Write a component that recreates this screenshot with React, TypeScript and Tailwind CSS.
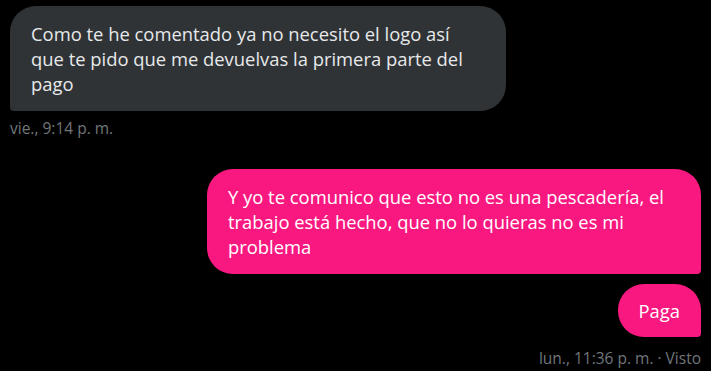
const font = { fontFamily: '"Segoe UI", "Open Sans", "Noto Sans", sans-serif' };

export default function App() {
  return (
    <div className="min-h-[371px] w-[711px] bg-black px-[10px] pt-[6px]" style={font}>
      <div className="flex flex-col items-start">
        <div className="w-[496px] rounded-[26px] rounded-bl-[4px] bg-[#2f3336] px-[21px] py-[15px] text-[18.4px] leading-[25px] text-[#e7e9ea]">
          Como te he comentado ya no necesito el logo así
          <br />
          que te pido que me devuelvas la primera parte del
          <br />
          pago
        </div>
        <div className="mt-[7px] text-[15.5px] leading-[20px] text-[#71767b]">vie., 9:14 p. m.</div>
      </div>

      <div className="mt-[31px] flex flex-col items-end">
        <div className="w-[494px] rounded-[26px] rounded-br-[4px] bg-[#f91880] px-[21px] py-[15px] text-[18.4px] leading-[25px] text-white">
          Y yo te comunico que esto no es una pescadería, el
          <br />
          trabajo está hecho, que no lo quieras no es mi
          <br />
          problema
        </div>
        <div className="mt-[10px] rounded-[26px] rounded-br-[4px] bg-[#f91880] px-[21px] py-[14px] text-[18.4px] leading-[25px] text-white">
          Paga
        </div>
        <div className="mt-[11px] text-[15.5px] leading-[20px] text-[#71767b]">lun., 11:36 p. m. · Visto</div>
      </div>
    </div>
  );
}
